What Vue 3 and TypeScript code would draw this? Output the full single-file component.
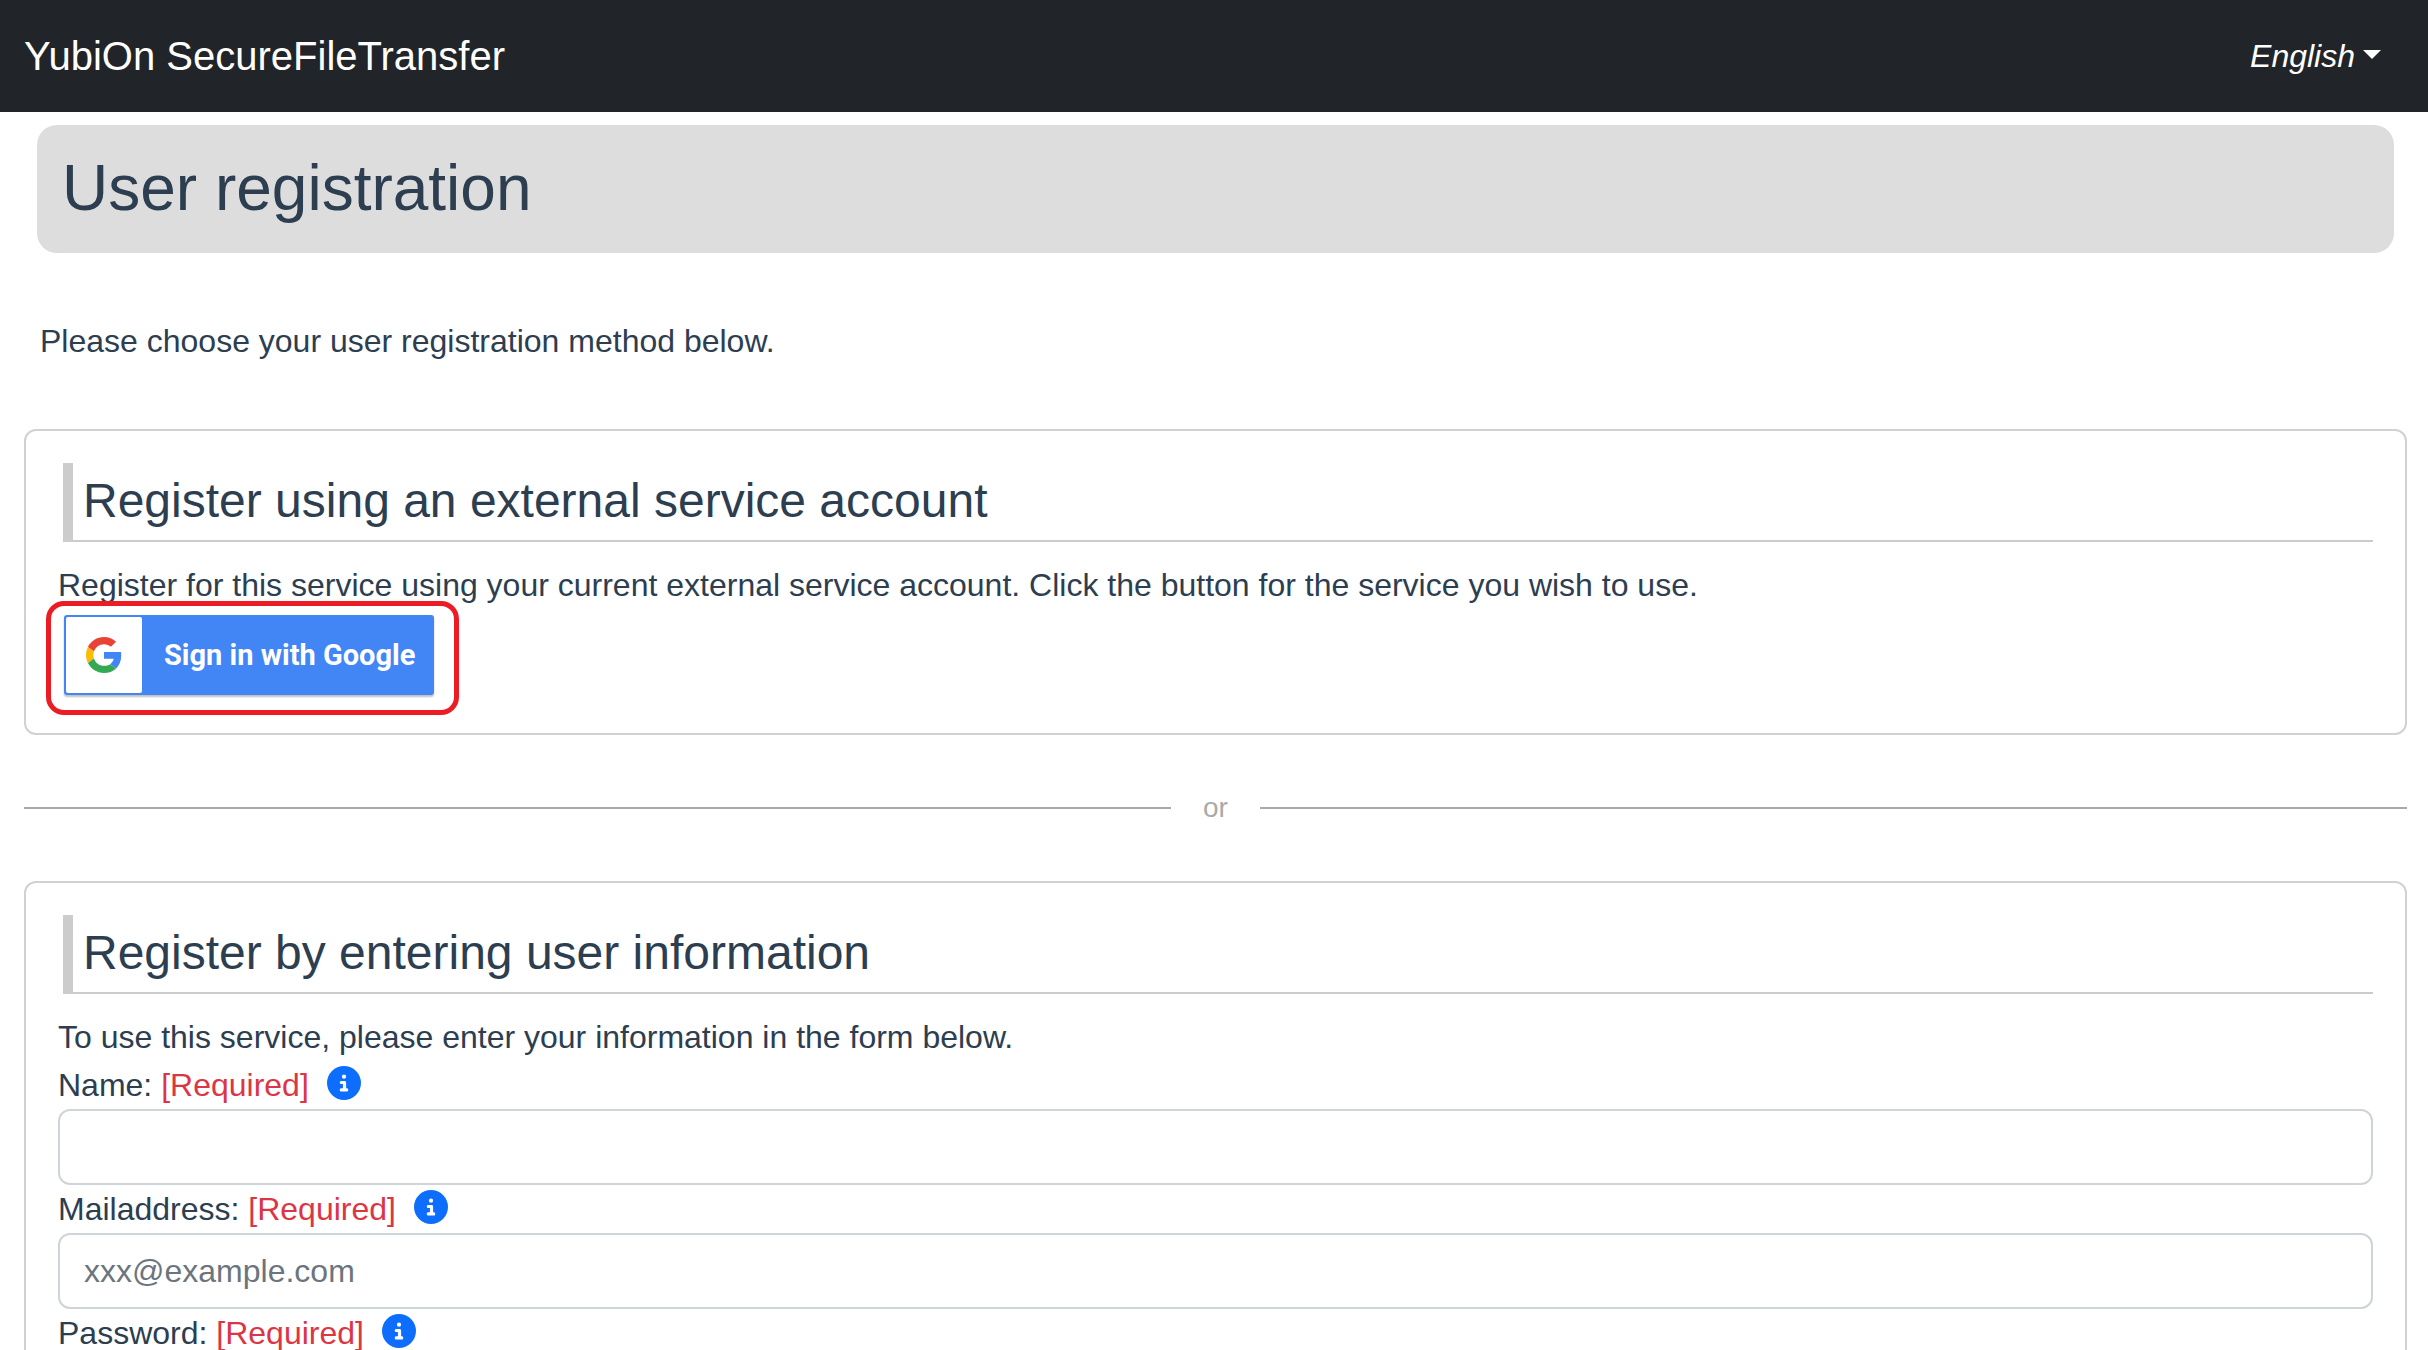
<script setup lang="ts">
import { reactive, ref } from 'vue'

interface Field {
  id: 'name' | 'mail' | 'password'
  label: string
  type: string
  placeholder: string
}

const language = ref('en')

const fields: Field[] = [
  { id: 'name', label: 'Name:', type: 'text', placeholder: '' },
  { id: 'mail', label: 'Mailaddress:', type: 'email', placeholder: 'xxx@example.com' },
  { id: 'password', label: 'Password:', type: 'password', placeholder: '' },
]

const form = reactive({ name: '', mail: '', password: '' })
</script>

<template>
  <div class="page">
    <header class="navbar">
      <a class="brand" href="#">YubiOn SecureFileTransfer</a>
      <div class="language">
        <select v-model="language" aria-label="Language">
          <option value="en">English</option>
        </select>
      </div>
    </header>

    <main class="content">
      <h1 class="title">User registration</h1>
      <p class="lead">Please choose your user registration method below.</p>

      <section class="card">
        <h2 class="heading">Register using an external service account</h2>
        <p class="text">
          Register for this service using your current external service account. Click the button for the service you
          wish to use.
        </p>
        <div class="highlight">
          <button class="google" type="button">
            <span class="google-icon">
              <svg viewBox="0 0 48 48" aria-hidden="true">
                <path fill="#EA4335" d="M24 9.5c3.54 0 6.71 1.22 9.21 3.6l6.85-6.85C35.9 2.38 30.47 0 24 0 14.62 0 6.51 5.38 2.56 13.22l7.98 6.19C12.43 13.72 17.74 9.5 24 9.5z" />
                <path fill="#4285F4" d="M46.98 24.55c0-1.57-.15-3.09-.38-4.55H24v9.02h12.94c-.58 2.96-2.26 5.48-4.78 7.18l7.73 6c4.51-4.18 7.09-10.36 7.09-17.65z" />
                <path fill="#FBBC05" d="M10.53 28.59c-.48-1.45-.76-2.99-.76-4.59s.27-3.14.76-4.59l-7.98-6.19C.92 16.46 0 20.12 0 24c0 3.88.92 7.54 2.56 10.78l7.97-6.19z" />
                <path fill="#34A853" d="M24 48c6.48 0 11.93-2.13 15.89-5.81l-7.73-6c-2.15 1.45-4.92 2.3-8.16 2.3-6.26 0-11.57-4.22-13.47-9.91l-7.98 6.19C6.51 42.62 14.62 48 24 48z" />
              </svg>
            </span>
            <span>Sign in with Google</span>
          </button>
        </div>
      </section>

      <div class="divider">or</div>

      <section class="card">
        <h2 class="heading">Register by entering user information</h2>
        <p class="text">To use this service, please enter your information in the form below.</p>
        <form @submit.prevent>
          <div v-for="field in fields" :key="field.id">
            <div class="field-head">
              <label :for="field.id">{{ field.label }} <span class="required">[Required]</span></label>
              <button class="info" type="button" :aria-label="`About ${field.id}`">
                <svg viewBox="0 0 512 512" aria-hidden="true">
                  <path fill="currentColor" d="M256 0a256 256 0 1 0 0 512A256 256 0 1 0 256 0zM216 336h24V272H216c-13.3 0-24-10.7-24-24s10.7-24 24-24h48c13.3 0 24 10.7 24 24v88h8c13.3 0 24 10.7 24 24s-10.7 24-24 24H216c-13.3 0-24-10.7-24-24s10.7-24 24-24zm40-208a32 32 0 1 1 0 64 32 32 0 1 1 0-64z" />
                </svg>
              </button>
            </div>
            <input :id="field.id" v-model="form[field.id]" class="input" :type="field.type" :placeholder="field.placeholder" />
          </div>
        </form>
      </section>
    </main>
  </div>
</template>

<style>
body {
  margin: 0;
  background: #fff;
}
</style>

<style scoped>
.page {
  height: 100vh;
  overflow: hidden;
  font-family: "Liberation Sans", Arial, sans-serif;
  font-size: 32px;
  line-height: 48px;
  color: #2c3e50;
}

.page *,
.page *::before,
.page *::after {
  box-sizing: border-box;
}

.navbar {
  display: flex;
  align-items: center;
  justify-content: space-between;
  height: 112px;
  padding: 0 47px 0 24px;
  background: #212529;
  color: #fff;
}

.brand {
  font-size: 40px;
  color: inherit;
  text-decoration: none;
}

.language {
  display: flex;
  align-items: center;
  gap: 8px;
}

.language select {
  appearance: none;
  field-sizing: content;
  padding: 0;
  border: 0;
  background: transparent;
  color: inherit;
  font: inherit;
  font-style: italic;
}

.language::after {
  content: "";
  margin-bottom: 4px;
  border: 9px solid transparent;
  border-top-color: #fff;
  border-bottom: 0;
}

.content {
  padding: 13px 21px 0 24px;
}

.title {
  margin: 0 13px;
  padding: 25px 25px 27px;
  border-radius: 20px;
  background: #ddd;
  font-size: 64px;
  font-weight: 400;
  line-height: 76px;
}

.lead {
  margin: 64px 16px;
}

.card {
  padding: 32px;
  border: 2px solid #d1d1d3;
  border-radius: 12px;
}

.heading {
  margin: 0 0 19px 5px;
  padding: 9px 10px 11px;
  border-left: 10px solid #ccc;
  border-bottom: 2px solid #ccc;
  font-size: 48px;
  font-weight: 400;
  line-height: 57px;
}

.text {
  margin: 0;
}

.highlight {
  position: relative;
  width: fit-content;
  margin: 6px;
}

.highlight::after {
  content: "";
  position: absolute;
  inset: -14px -25px -20px -18px;
  border: 5px solid #ed1c24;
  border-radius: 18px;
  pointer-events: none;
}

.google {
  display: flex;
  align-items: center;
  gap: 22px;
  width: 370px;
  height: 80px;
  padding: 2px;
  border: 0;
  border-radius: 3px;
  background: #4285f4;
  box-shadow: 0 2px 2px rgba(0, 0, 0, 0.25);
  color: #fff;
  font-family: Roboto, "Liberation Sans", sans-serif;
  font-size: 29px;
  font-weight: 700;
  white-space: nowrap;
}

.google-icon {
  display: flex;
  align-items: center;
  justify-content: center;
  width: 76px;
  height: 76px;
  border-radius: 2px;
  background: #fff;
}

.google-icon svg {
  width: 36px;
  height: 36px;
}

.divider {
  display: flex;
  align-items: center;
  gap: 32px;
  margin: 49px 0;
  color: #aaa;
  font-size: 28px;
}

.divider::before,
.divider::after {
  content: "";
  flex: 1;
  height: 2px;
  background: #a9a9a9;
}

.field-head {
  height: 48px;
}

.required {
  color: #dc3545;
}

.info {
  width: 34px;
  height: 34px;
  margin-left: 18px;
  padding: 0;
  border: 0;
  background: transparent;
  color: #0d6efd;
  vertical-align: -4px;
}

.info svg {
  display: block;
  width: 34px;
  height: 34px;
}

.input {
  display: block;
  width: 100%;
  height: 76px;
  padding: 12px 24px;
  border: 2px solid #ced4da;
  border-radius: 12px;
  background: #fff;
  color: #212529;
  font: inherit;
}

.input::placeholder {
  color: #6c757d;
  opacity: 1;
}
</style>
